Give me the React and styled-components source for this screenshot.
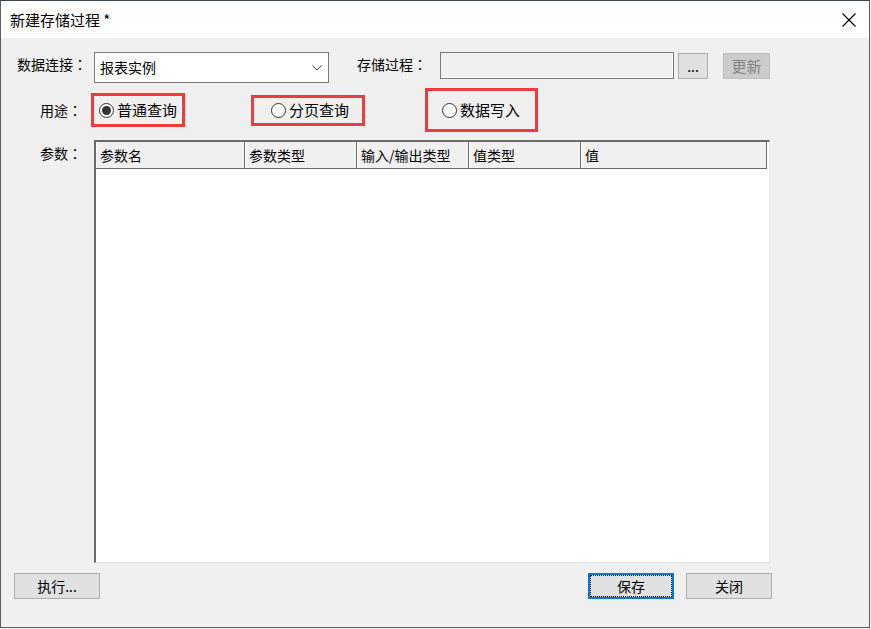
import React from 'react';
import styled, { createGlobalStyle } from 'styled-components';

const Global = createGlobalStyle`
  html, body { margin: 0; padding: 0; background: #f0f0f0; }
  body { font-family: "Noto Sans CJK SC", "Liberation Sans", sans-serif; color: #000; }
  * { box-sizing: border-box; }
`;

const Window = styled.div`
  width: 870px;
  height: 628px;
  border: 1px solid #5f5f5f;
  border-top-color: #3b4350;
  display: flex;
  flex-direction: column;
  background: #f0f0f0;
`;

const TitleBar = styled.div`
  height: 37px;
  flex: none;
  background: #fff;
  display: flex;
  align-items: center;
  justify-content: space-between;
  padding-left: 9px;
`;

const Title = styled.span`
  font-size: 15px;
  line-height: 37px;
`;

const CloseBtn = styled.div`
  width: 40px;
  height: 37px;
  display: flex;
  align-items: center;
  justify-content: center;
`;

const Body = styled.div`
  flex: 1;
  display: flex;
  flex-direction: column;
  padding: 14px 0 28px 13px;
  min-height: 0;
`;

const Row = styled.div`
  display: flex;
  align-items: ${(p) => p.$align || 'flex-start'};
  height: ${(p) => (p.$h ? `${p.$h}px` : 'auto')};
  margin-top: ${(p) => p.$mt || 0}px;
  flex: ${(p) => (p.$grow ? 1 : 'none')};
  min-height: 0;
`;

const Label = styled.div`
  flex: none;
  width: ${(p) => p.$w}px;
  padding-left: ${(p) => p.$pl || 0}px;
  margin-left: ${(p) => p.$ml || 0}px;
  font-size: 14px;
  line-height: ${(p) => p.$lh || 24}px;
  white-space: nowrap;
`;

const Colon = styled.span`
  font-family: "Noto Sans CJK TC", "Noto Sans CJK SC", sans-serif;
`;

const Combo = styled.div`
  width: 235px;
  height: 31px;
  background: #fff;
  border: 1px solid #7a7a7a;
  display: flex;
  align-items: center;
  justify-content: space-between;
  padding: 0 6px 0 5px;
  font-size: 14px;
  line-height: 29px;
`;

const TextField = styled.div`
  width: 234px;
  height: 27px;
  background: #f0f0f0;
  border: 1px solid #7a7a7a;
  box-shadow: inset -1px -1px 0 #fdfdfd;
`;

const Button = styled.div`
  flex: none;
  position: relative;
  width: ${(p) => p.$w}px;
  height: 26px;
  margin-top: ${(p) => p.$mt || 0}px;
  margin-left: ${(p) => p.$ml || 0}px;
  background: ${(p) => (p.$disabled ? '#cccccc' : '#e1e1e1')};
  border: ${(p) => (p.$focused ? '2px solid #0078d7' : `1px solid ${p.$disabled ? '#bfbfbf' : '#adadad'}`)};
  color: ${(p) => (p.$disabled ? '#838383' : '#000')};
  font-size: ${(p) => p.$fs || 14}px;
  line-height: ${(p) => (p.$focused ? 22 : 24)}px;
  text-align: center;
  white-space: nowrap;
  ${(p) =>
    p.$focused &&
    `&::after {
      content: '';
      position: absolute;
      inset: 0;
      border: 1px dotted #000;
    }`}
`;

const Annotation = styled.div`
  flex: none;
  display: flex;
  align-items: center;
  width: ${(p) => p.$w}px;
  height: ${(p) => p.$h}px;
  margin-left: ${(p) => p.$ml || 0}px;
  padding-left: ${(p) => p.$pl}px;
  border: 3px solid #ef3b3b;
`;

const RadioCircle = styled.span`
  flex: none;
  width: 15px;
  height: 15px;
  border-radius: 50%;
  border: 1px solid #333;
  background: #fff;
  display: flex;
  align-items: center;
  justify-content: center;
  &::after {
    content: '';
    width: 9px;
    height: 9px;
    border-radius: 50%;
    background: ${(p) => (p.$checked ? '#333' : 'transparent')};
  }
`;

const RadioText = styled.span`
  margin-left: 3px;
  font-size: 15px;
  line-height: 22px;
  white-space: nowrap;
`;

const Grid = styled.div`
  width: 676px;
  height: 100%;
  background: #fff;
  border-top: 2px solid #6a6a6a;
  border-left: 2px solid #6a6a6a;
  border-right: 1px solid #e3e3e3;
  border-bottom: 1px solid #e3e3e3;
  display: flex;
  flex-direction: column;
`;

const HeaderRow = styled.div`
  display: flex;
  height: 27px;
  flex: none;
`;

const HeaderCell = styled.div`
  flex: none;
  width: ${(p) => p.$w}px;
  height: 27px;
  background: #f0f0f0;
  border-right: 1px solid #6a6a6a;
  border-bottom: 1px solid #6a6a6a;
  box-shadow: inset 1px 0 0 #fff;
  padding-left: 4px;
  font-size: 14px;
  line-height: 26px;
  white-space: nowrap;
`;

const Footer = styled.div`
  display: flex;
  align-items: flex-start;
  justify-content: space-between;
  margin-top: 10px;
  width: 758px;
  flex: none;
`;

const ButtonGroup = styled.div`
  display: flex;
  gap: 12px;
`;

const Radio = ({ checked, children }) => (
  <>
    <RadioCircle $checked={checked} />
    <RadioText>{children}</RadioText>
  </>
);

const columns = [
  { name: '参数名', w: 149 },
  { name: '参数类型', w: 112 },
  { name: '输入/输出类型', w: 112 },
  { name: '值类型', w: 112 },
  { name: '值', w: 186 },
];

export default function App() {
  return (
    <>
      <Global />
      <Window>
        <TitleBar>
          <Title>新建存储过程 *</Title>
          <CloseBtn>
            <svg width="14" height="14" viewBox="0 0 14 14">
              <path d="M0.5 0.5 L13.5 13.5 M13.5 0.5 L0.5 13.5" stroke="#000" strokeWidth="1.1" fill="none" />
            </svg>
          </CloseBtn>
        </TitleBar>
        <Body>
          <Row $h={31}>
            <Label $w={80} $pl={3}>数据连接<Colon>：</Colon></Label>
            <Combo>
              <span>报表实例</span>
              <svg width="10" height="6" viewBox="0 0 10 6">
                <path d="M0.5 0.5 L5 5 L9.5 0.5" stroke="#444" strokeWidth="1" fill="none" />
              </svg>
            </Combo>
            <Label $w={83} $ml={28}>存储过程<Colon>：</Colon></Label>
            <TextField />
            <Button $w={30} $mt={1} $ml={4}>...</Button>
            <Button $w={47} $mt={1} $ml={15} $disabled $fs={15}>更新</Button>
          </Row>
          <Row $h={44} $mt={5} $align="center">
            <Label $w={77} $pl={26}>用途<Colon>：</Colon></Label>
            <Annotation $w={94} $h={34} $pl={5}>
              <Radio checked>普通查询</Radio>
            </Annotation>
            <Annotation $w={114} $h={31} $pl={17} $ml={66}>
              <Radio>分页查询</Radio>
            </Annotation>
            <Annotation $w={113} $h={44} $pl={14} $ml={60}>
              <Radio>数据写入</Radio>
            </Annotation>
          </Row>
          <Row $mt={8} $grow>
            <Label $w={80} $pl={26} $lh={26}>参数<Colon>：</Colon></Label>
            <Grid>
              <HeaderRow>
                {columns.map((c) => (
                  <HeaderCell key={c.name} $w={c.w}>{c.name}</HeaderCell>
                ))}
              </HeaderRow>
            </Grid>
          </Row>
          <Footer>
            <Button $w={86}>执行...</Button>
            <ButtonGroup>
              <Button $w={86} $focused>保存</Button>
              <Button $w={86}>关闭</Button>
            </ButtonGroup>
          </Footer>
        </Body>
      </Window>
    </>
  );
}
